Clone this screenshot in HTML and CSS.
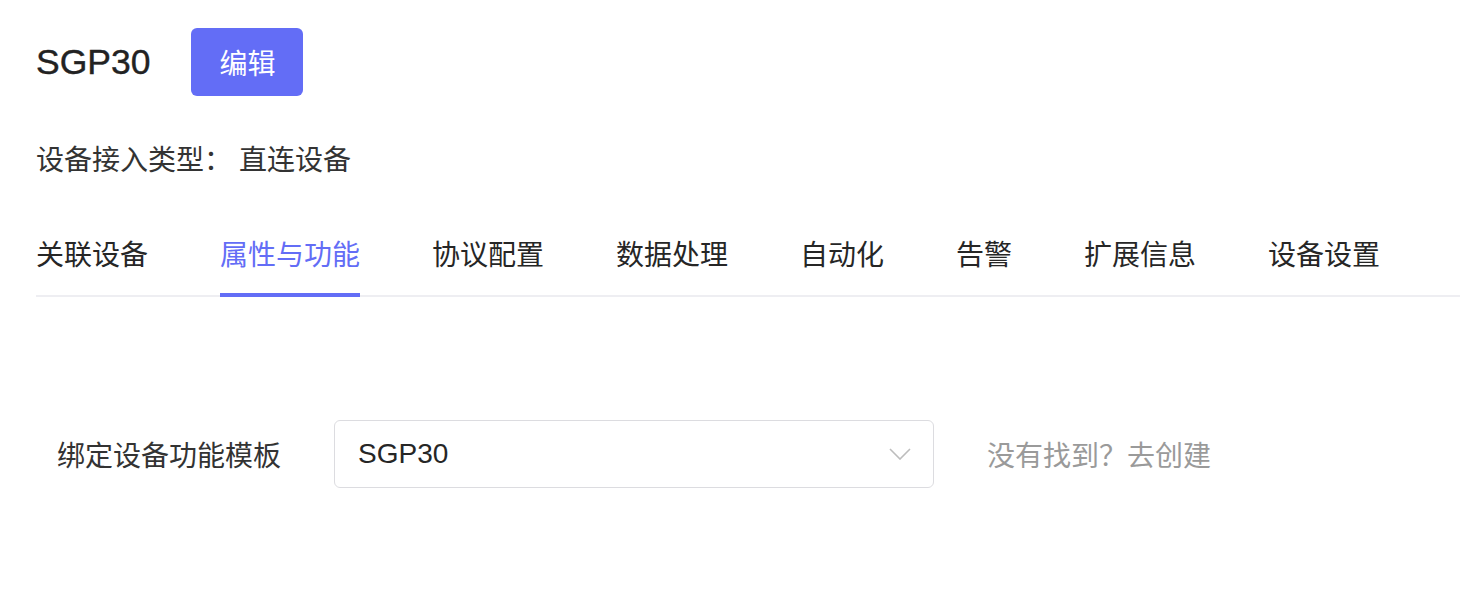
FILE: index.html
```html
<!DOCTYPE html>
<html lang="zh-CN">
<head>
<meta charset="utf-8">
<title>SGP30</title>
<link rel="stylesheet" href="styles.css">
</head>
<body>
<div class="page">
  <div class="header">
    <h1 class="title">SGP30</h1>
    <button class="btn-primary">编辑</button>
  </div>
  <div class="info">
    <span class="info-label">设备接入类型：</span><span class="info-value">直连设备</span>
  </div>
  <div class="tabs">
    <div class="tab">关联设备</div>
    <div class="tab active">属性与功能</div>
    <div class="tab">协议配置</div>
    <div class="tab">数据处理</div>
    <div class="tab">自动化</div>
    <div class="tab">告警</div>
    <div class="tab">扩展信息</div>
    <div class="tab">设备设置</div>
  </div>
  <div class="form-row">
    <label class="form-label">绑定设备功能模板</label>
    <div class="select">
      <span class="select-value">SGP30</span>
      <svg class="chevron" width="22" height="12" viewBox="0 0 22 12"><path d="M1 1 L11 11 L21 1" fill="none" stroke="#bdbdbd" stroke-width="1.6"/></svg>
    </div>
    <span class="hint">没有找到？去创建</span>
  </div>
</div>
</body>
</html>
```

FILE: styles.css
```css
html, body {
  margin: 0;
  padding: 0;
  background: #ffffff;
}
body {
  font-family: "Liberation Sans", "Noto Sans CJK SC", sans-serif;
  color: #262626;
}
.page {
  padding-left: 36px;
}
.header {
  display: flex;
  align-items: center;
  padding-top: 28px;
  gap: 41px;
}
.title {
  margin: 0;
  font-size: 35.5px;
  font-weight: 400;
  line-height: 68px;
  color: #222;
  -webkit-text-stroke: 0.4px #222;
}
.btn-primary {
  width: 112px;
  height: 68px;
  border: none;
  border-radius: 6px;
  background: #636df6;
  color: #fff;
  font-family: "Noto Sans CJK SC", sans-serif;
  font-size: 28px;
  padding: 0;
}
.info {
  margin-top: 42px;
  font-family: "Noto Sans CJK SC", sans-serif;
  font-size: 28px;
  line-height: 40px;
  color: #333;
  display: flex;
}
.info-label {
  margin-right: 7px;
}
.tabs {
  margin-top: 55px;
  display: flex;
  gap: 72px;
  border-bottom: 2px solid #eeeef2;
}
.tab {
  position: relative;
  font-family: "Noto Sans CJK SC", sans-serif;
  font-size: 28px;
  line-height: 40px;
  padding-bottom: 22px;
  color: #262626;
}
.tab.active {
  color: #636df6;
}
.tab.active::after {
  content: "";
  position: absolute;
  left: 0;
  right: 0;
  bottom: -2px;
  height: 4px;
  background: #636df6;
}
.form-row {
  margin-top: 123px;
  padding-left: 21px;
  display: flex;
  align-items: center;
  gap: 53px;
}
.form-label {
  font-family: "Noto Sans CJK SC", sans-serif;
  font-size: 28px;
  line-height: 40px;
  color: #333;
}
.select {
  box-sizing: border-box;
  width: 600px;
  height: 68px;
  border: 1.5px solid #dcdce0;
  border-radius: 6px;
  display: flex;
  align-items: center;
  justify-content: space-between;
  padding: 0 22px 0 23px;
}
.select-value {
  font-size: 28px;
  color: #262626;
}
.chevron {
  display: block;
}
.hint {
  font-family: "Noto Sans CJK SC", sans-serif;
  font-size: 28px;
  color: #9a9a9a;
}
```
